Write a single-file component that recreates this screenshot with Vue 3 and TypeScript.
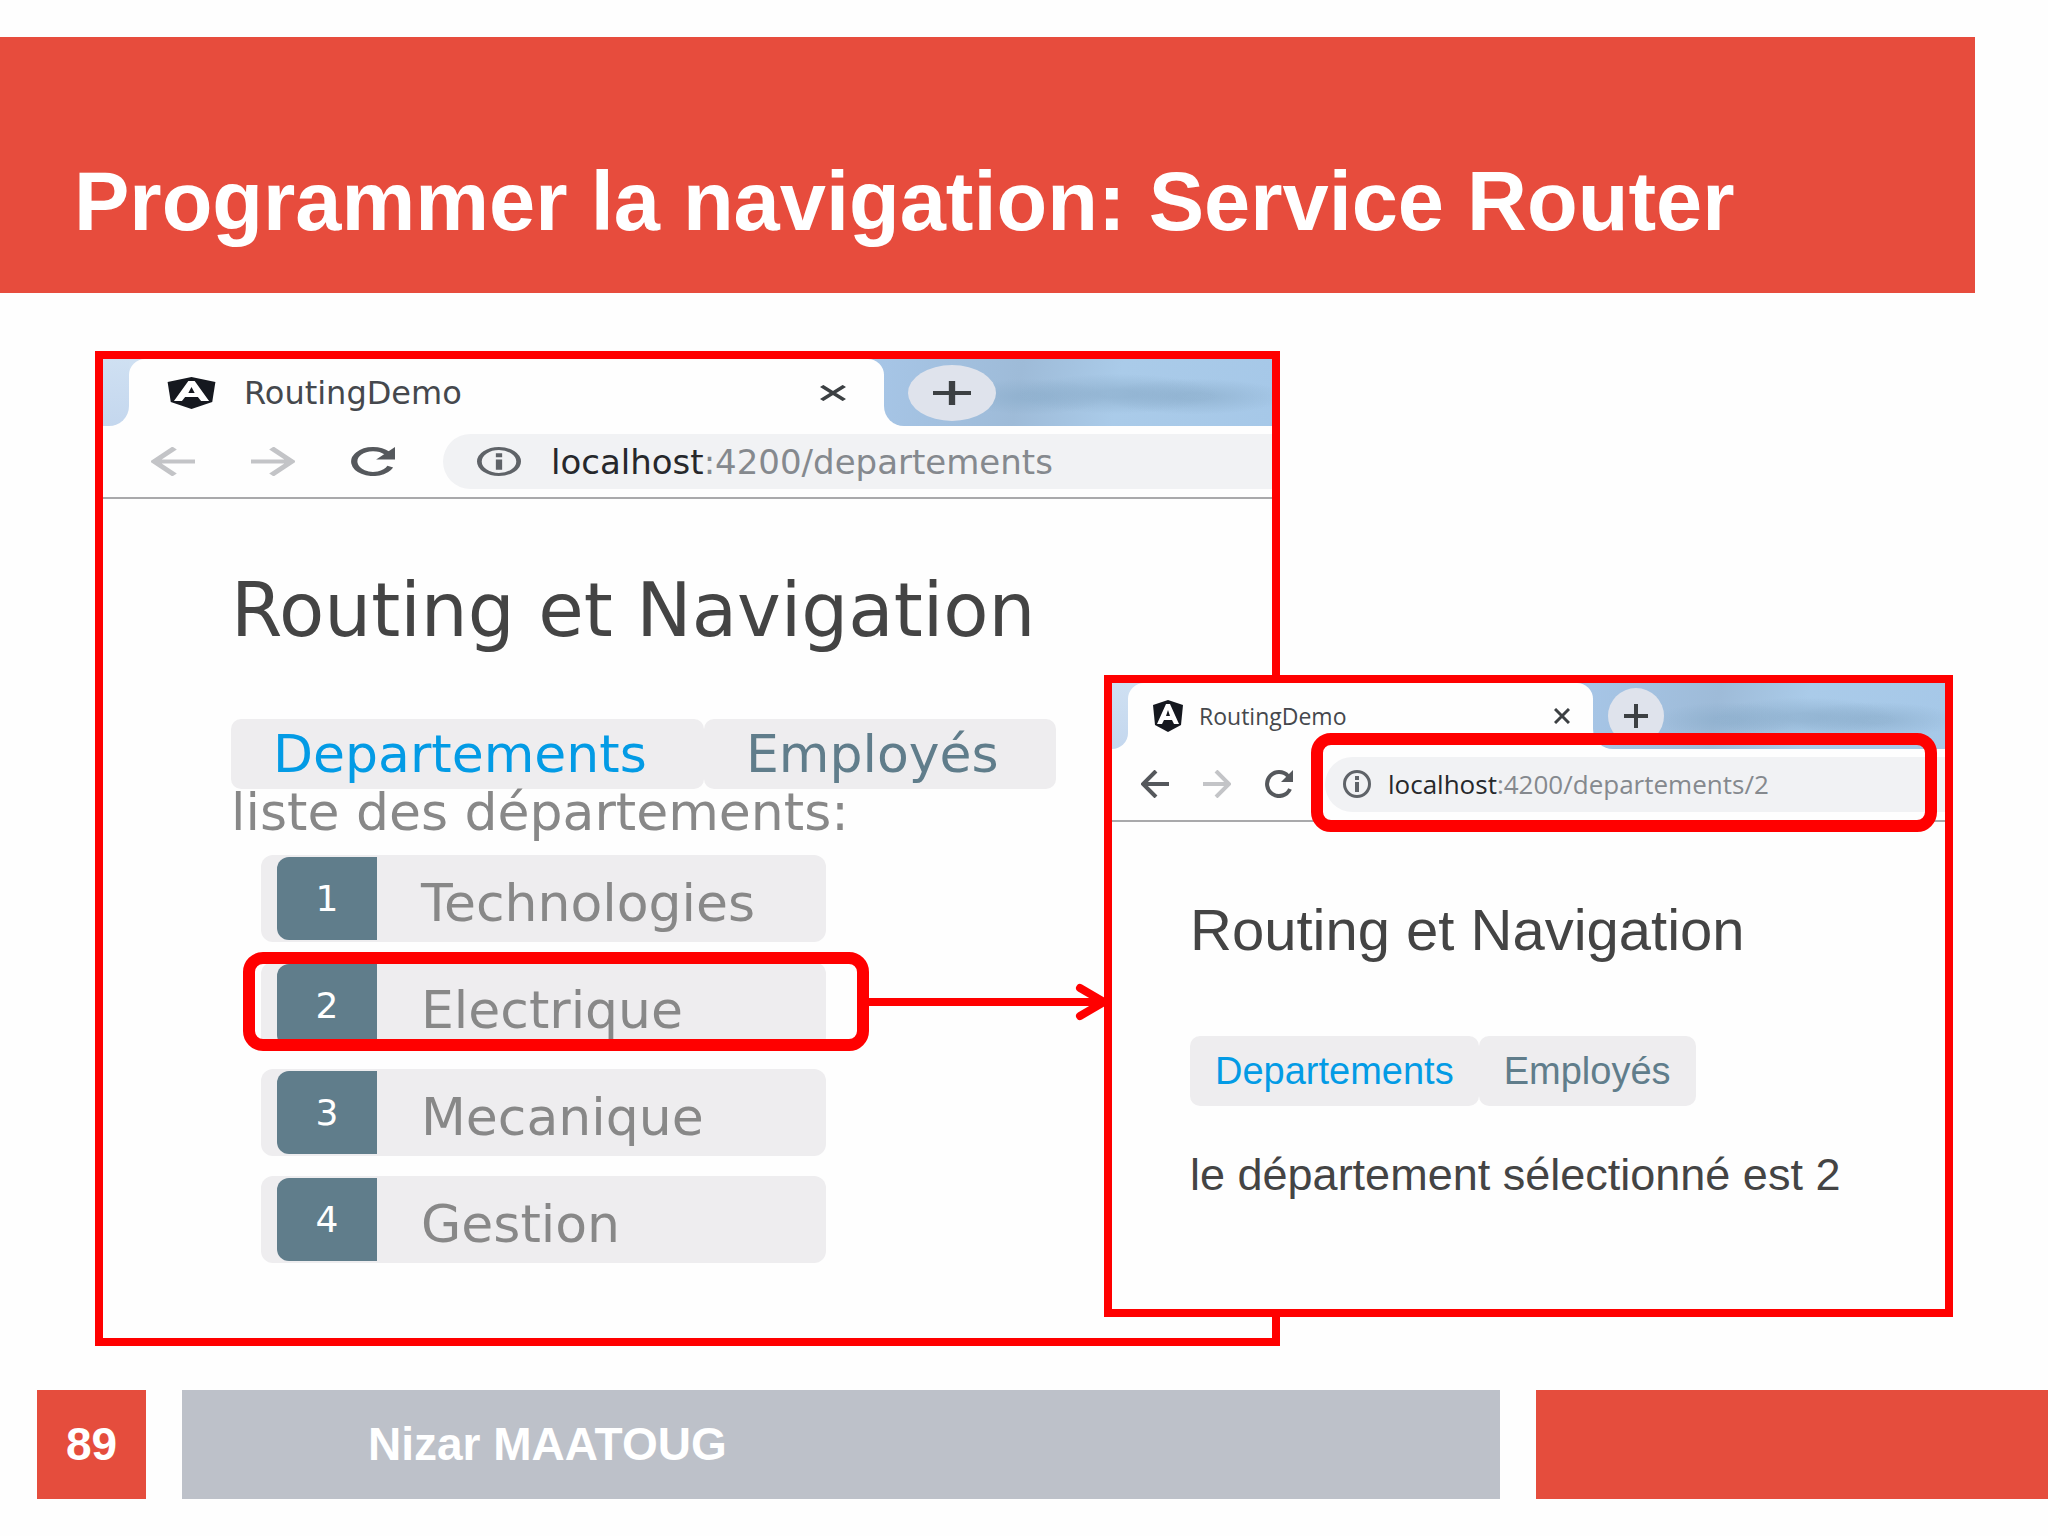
<script setup lang="ts">
interface Departement {
  id: number
  nom: string
}

const departements: Departement[] = [
  { id: 1, nom: 'Technologies' },
  { id: 2, nom: 'Electrique' },
  { id: 3, nom: 'Mecanique' },
  { id: 4, nom: 'Gestion' },
]
const selectedId = 2

const windows = [
  { kind: 'wide', path: ':4200/departements' },
  { kind: 'narrow', path: ':4200/departements/2' },
]
</script>

<template>
  <div class="slide">
    <header class="banner">
      <h1>Programmer la navigation: Service Router</h1>
    </header>

    <main class="stage">
      <section v-for="w in windows" :key="w.kind" class="window" :class="w.kind">
        <div class="strip">
          <span class="strip-left"></span>
          <div class="tab">
            <div class="tab-body">
              <svg class="favicon" viewBox="0 0 32 32" preserveAspectRatio="none" aria-hidden="true">
                <path d="M16 0 31 5 29 25 16 32 3 25 1 5Z" fill="#15181f" />
                <path d="M14 4h4l9 20h-5l-2-4h-8l-2 4H5ZM16 10l-2 6h4Z" fill="#fff" fill-rule="evenodd" />
              </svg>
              <span class="tab-title">RoutingDemo</span>
              <button class="close" type="button" aria-label="Fermer">
                <svg viewBox="0 0 16 16" preserveAspectRatio="none"><path d="M1 1 15 15M15 1 1 15" fill="none" stroke="#3c4043" stroke-width="3" /></svg>
              </button>
            </div>
          </div>
          <div class="strip-rest">
            <button class="plus" type="button" aria-label="Nouvel onglet">
              <svg viewBox="0 0 24 24" preserveAspectRatio="none"><path d="M12 0V24M0 12H24" fill="none" stroke="#3c4043" stroke-width="4" /></svg>
            </button>
          </div>
        </div>

        <div class="toolbar">
          <button class="tool back" type="button" aria-label="Retour">
            <svg viewBox="0 0 28 28" preserveAspectRatio="none"><path d="M28 14H3M15 1 2 14 15 27" fill="none" stroke="currentColor" stroke-width="4" /></svg>
          </button>
          <button class="tool forward" type="button" aria-label="Suivant">
            <svg viewBox="0 0 28 28" preserveAspectRatio="none"><path d="M0 14H25M13 1 26 14 13 27" fill="none" stroke="currentColor" stroke-width="4" /></svg>
          </button>
          <button class="tool reload" type="button" aria-label="Actualiser">
            <svg viewBox="0 0 28 28" preserveAspectRatio="none">
              <path d="M25 19A12 12 0 1 1 23 6" fill="none" stroke="currentColor" stroke-width="4" />
              <path d="M28 0V12H16Z" fill="currentColor" />
            </svg>
          </button>
          <div class="address">
            <svg class="info" viewBox="0 0 28 28" preserveAspectRatio="none" aria-hidden="true">
              <circle cx="14" cy="14" r="12.500" fill="none" stroke="#5f6368" stroke-width="3" />
              <path d="M12 6h4v4h-4ZM12 12h4v10h-4Z" fill="#5f6368" />
            </svg>
            <span class="url"><span class="host">localhost</span>{{ w.path }}</span>
          </div>
          <span v-if="w.kind === 'narrow'" class="ring ring-address"></span>
        </div>

        <div class="page">
          <h2>Routing et Navigation</h2>
          <nav>
            <a class="active" href="#departements">Departements</a>
            <a href="#employes">Employés</a>
          </nav>
          <template v-if="w.kind === 'wide'">
            <p class="caption">liste des départements:</p>
            <ul>
              <li v-for="d in departements" :key="d.id">
                <span class="badge">{{ d.id }}</span>
                <span class="name">{{ d.nom }}</span>
                <span v-if="d.id === selectedId" class="ring ring-item"></span>
              </li>
            </ul>
          </template>
          <h3 v-else>le département sélectionné est {{ selectedId }}</h3>
        </div>

        <svg v-if="w.kind === 'narrow'" class="arrow" viewBox="0 0 244 40" aria-hidden="true">
          <path d="M0 20H234M212 6 236 20 212 34" fill="none" stroke="#f00" stroke-width="8" stroke-linecap="round" />
        </svg>
      </section>
    </main>

    <footer class="footer">
      <span class="number">89</span>
      <span class="author">Nizar MAATOUG</span>
      <span class="block"></span>
    </footer>
  </div>
</template>

<style>
body {
  margin: 0;
  background: #fefefe;
}
</style>

<style scoped>
.slide {
  display: flex;
  flex-direction: column;
  box-sizing: border-box;
  min-height: 100vh;
  padding: 37px 0;
  font-family: 'Liberation Sans', Arial, sans-serif;
  overflow: hidden;
}

h1,
h2,
h3,
p,
ul {
  margin: 0;
  padding: 0;
  font-weight: 400;
}

button {
  display: flex;
  align-items: center;
  justify-content: center;
  padding: 0;
  border: 0;
  background: none;
}

svg {
  display: block;
}

.banner {
  box-sizing: border-box;
  height: 256px;
  margin-right: 73px;
  padding: 117px 74px 0;
  background: #e74c3d;
}

.banner h1 {
  color: #fff;
  font-size: 83px;
  font-weight: 700;
  line-height: 96px;
  white-space: nowrap;
}

.stage {
  display: grid;
  grid-template-columns: 1009fr 176fr 673fr;
  grid-template-rows: 324px auto 29px;
  margin: 58px 95px 44px;
}

.window {
  position: relative;
  box-sizing: border-box;
  min-width: 0;
  border: 8px solid #f00;
  background: #fefefe;
}

.wide {
  grid-area: 1 / 1 / 4 / 3;
  font-family: 'DejaVu Sans', Verdana, sans-serif;
}

.narrow {
  grid-area: 2 / 2 / 3 / 4;
}

/* Tab strip */
.strip {
  display: flex;
  height: 67px;
}

.strip-left {
  width: 26px;
  border-bottom-right-radius: 20px;
  background: linear-gradient(#cfe0f2, #c4d7ee);
}

.tab {
  width: 755px;
  background: linear-gradient(90deg, #cfe0f2 50%, #a6c5e6 50%) top / 100% 30px no-repeat;
}

.tab-body {
  display: flex;
  align-items: center;
  box-sizing: border-box;
  height: 100%;
  padding: 0 38px 0 37px;
  border-radius: 16px 16px 0 0;
  background: #fefefe;
}

.favicon {
  width: 51px;
  height: 32px;
}

.tab-title {
  flex: 1;
  margin-left: 27px;
  color: #45484d;
  font-size: 32px;
  line-height: 36px;
}

.close svg {
  width: 26px;
  height: 16px;
}

.strip-rest {
  display: flex;
  flex: 1;
  align-items: center;
  padding-left: 24px;
  border-bottom-left-radius: 20px;
  background:
    radial-gradient(ellipse 26% 20px at 60% 52%, #8badcb99 20%, transparent 100%),
    radial-gradient(ellipse 24% 18px at 80% 56%, #8badcb99 20%, transparent 100%),
    radial-gradient(ellipse 20% 18px at 38% 56%, #8badcb99 20%, transparent 100%),
    linear-gradient(100deg, #a6c5e6, #9ebbd8 35%, #aacbe9 60%, #a6c8e8);
}

.plus {
  width: 88px;
  height: 56px;
  border-radius: 50%;
  background: #dfe3ec;
}

.plus svg {
  width: 38px;
  height: 24px;
}

/* Toolbar */
.toolbar {
  position: relative;
  display: flex;
  align-items: center;
  box-sizing: border-box;
  height: 73px;
  padding-left: 48px;
  border-bottom: 2px solid #a9a9ab;
}

.tool {
  margin-right: 56px;
  color: #55585c;
}

.tool svg,
.info {
  width: 44px;
  height: 29px;
}

.forward,
.wide .back {
  color: #c3c4c7;
}

.wide .reload {
  margin-right: 48px;
}

.address {
  display: flex;
  flex: 1;
  align-items: center;
  box-sizing: border-box;
  height: 55px;
  padding-left: 34px;
  border-radius: 28px 0 0 28px;
  background: #f1f2f4;
}

.url {
  margin-left: 30px;
  color: #85898e;
  font-size: 34px;
  line-height: 40px;
  white-space: nowrap;
}

.host {
  color: #26282b;
}

/* Page content */
.page {
  padding: 71px 0 0 128px;
}

h2 {
  color: #444;
  font-size: 74px;
  line-height: 80px;
  white-space: nowrap;
}

nav {
  display: flex;
  margin-top: 69px;
}

nav a {
  box-sizing: border-box;
  width: 352px;
  height: 70px;
  padding-left: 42px;
  border-radius: 10px;
  background: #eeedef;
  color: #607d8b;
  font-size: 52px;
  line-height: 70px;
  text-decoration: none;
}

.wide nav a.active {
  width: 473px;
}

nav a.active {
  color: #039be5;
}

.caption {
  color: #888;
  font-size: 52px;
  line-height: 46px;
}

ul {
  display: flex;
  flex-direction: column;
  gap: 20px;
  width: 565px;
  margin: 20px 0 0 30px;
  list-style: none;
}

li {
  position: relative;
  display: flex;
  align-items: center;
  box-sizing: border-box;
  height: 87px;
  padding-left: 16px;
  border-radius: 12px;
  background: #eeedef;
}

.badge {
  width: 100px;
  height: 83px;
  border-radius: 12px 0 0 12px;
  background: #607d8b;
  color: #fff;
  font-size: 36px;
  line-height: 83px;
  text-align: center;
}

.name {
  margin-left: 44px;
  padding-top: 8px;
  color: #888;
  font-size: 52px;
  line-height: 56px;
}

/* Second capture: natural proportions */
.narrow .strip {
  height: 66px;
}

.narrow .strip-left {
  width: 16px;
}

.narrow .tab {
  width: 465px;
}

.narrow .tab-body {
  padding: 0 23px 0 24px;
}

.narrow .favicon {
  width: 32px;
}

.narrow .tab-title {
  margin-left: 15px;
  font-family: 'Open Sans', 'Noto Sans', sans-serif;
  font-size: 23px;
}

.narrow .close svg {
  width: 16px;
}

.narrow .strip-rest {
  padding-left: 15px;
}

.narrow .plus {
  width: 56px;
}

.narrow .plus svg {
  width: 24px;
}

.narrow .toolbar {
  padding: 0 0 1px 29px;
}

.narrow .tool {
  margin-right: 34px;
}

.narrow .reload {
  margin-right: 32px;
}

.narrow .tool svg,
.narrow .info {
  width: 28px;
  height: 28px;
}

.narrow .address {
  padding-left: 18px;
}

.narrow .url {
  margin-left: 17px;
  font-family: 'Open Sans', 'Noto Sans', sans-serif;
  font-size: 26px;
}

.narrow .page {
  padding: 68px 0 0 78px;
}

.narrow h2 {
  font-size: 58px;
}

.narrow nav {
  margin-top: 66px;
}

.narrow nav a {
  width: auto;
  padding: 0 25px;
  font-size: 38px;
}

h3 {
  margin: 41px 0 106px;
  color: #444;
  font-size: 45px;
  line-height: 56px;
  white-space: nowrap;
}

/* Annotations */
.ring {
  position: absolute;
  box-sizing: border-box;
  height: 99px;
  border: 12px solid #f00;
  border-radius: 20px;
}

.ring-item {
  top: -10px;
  right: -43px;
  left: -18px;
}

.ring-address {
  top: -16px;
  right: 8px;
  left: 199px;
}

.arrow {
  position: absolute;
  top: 299px;
  right: 100%;
  width: 244px;
  height: 40px;
}

/* Footer */
.footer {
  display: flex;
  gap: 36px;
  height: 109px;
  margin-left: 37px;
  color: #fff;
  font-size: 46px;
  font-weight: 700;
  line-height: 108px;
}

.number {
  width: 109px;
  background: #e54d3d;
  text-align: center;
}

.author {
  flex: 1317;
  background: #bdc1c9;
  text-indent: 186px;
}

.block {
  flex: 512;
  background: #e54d3d;
}
</style>
